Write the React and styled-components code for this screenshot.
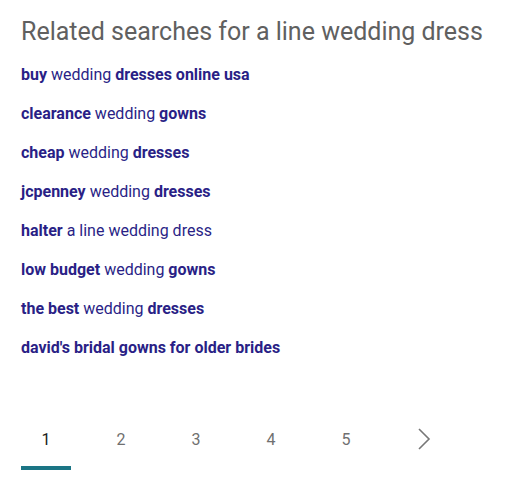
import React from 'react';
import styled, { createGlobalStyle } from 'styled-components';

const GlobalStyle = createGlobalStyle`
  html, body {
    margin: 0;
    padding: 0;
    background: #fff;
  }
  body {
    font-family: Roboto, "Liberation Sans", Arial, sans-serif;
  }
`;

const Wrapper = styled.div`
  width: 521px;
  height: 485px;
  box-sizing: border-box;
  padding: 15px 0 0 21px;
`;

const Title = styled.h2`
  margin: 0 0 16px;
  font-size: 25px;
  font-weight: 400;
  line-height: 34px;
  color: #606060;
`;

const List = styled.div`
  display: flex;
  flex-direction: column;
`;

const Link = styled.a`
  display: block;
  height: 39px;
  font-size: 16px;
  line-height: 20px;
  color: #2a1f86;
  text-decoration: none;

  b {
    font-weight: 700;
  }
`;

const Pager = styled.div`
  display: flex;
  align-items: flex-start;
  margin-top: 45px;
`;

const Page = styled.div`
  width: 50px;
  margin-right: 25px;
  height: 48px;
  box-sizing: border-box;
  padding-top: 8px;
  display: flex;
  justify-content: center;
  font-size: 16px;
  line-height: 20px;
  color: ${({ $active }) => ($active ? '#202020' : '#707070')};
  border-bottom: 4px solid ${({ $active }) => ($active ? '#1b7585' : 'transparent')};
`;

const NextIcon = styled.svg`
  margin: -3px 0 0 5px;
`;

const searches = [
  [['buy', true], [' wedding ', false], ['dresses online usa', true]],
  [['clearance', true], [' wedding ', false], ['gowns', true]],
  [['cheap', true], [' wedding ', false], ['dresses', true]],
  [['jcpenney', true], [' wedding ', false], ['dresses', true]],
  [['halter', true], [' a line wedding dress', false]],
  [['low budget', true], [' wedding ', false], ['gowns', true]],
  [['the best', true], [' wedding ', false], ['dresses', true]],
  [["david's bridal gowns for older brides", true]],
];

export default function App() {
  return (
    <Wrapper>
      <GlobalStyle />
      <Title>Related searches for a line wedding dress</Title>
      <List>
        {searches.map((parts, i) => (
          <Link key={i} href="#">
            {parts.map(([text, bold], j) => (bold ? <b key={j}>{text}</b> : <span key={j}>{text}</span>))}
          </Link>
        ))}
      </List>
      <Pager>
        {[1, 2, 3, 4, 5].map((n) => (
          <Page key={n} $active={n === 1}>{n}</Page>
        ))}
        <Page>
          <NextIcon width="14" height="24" viewBox="0 0 14 24" fill="none">
            <path d="M2 2 L12 12 L2 22" stroke="#777" strokeWidth="1.6" />
          </NextIcon>
        </Page>
      </Pager>
    </Wrapper>
  );
}
